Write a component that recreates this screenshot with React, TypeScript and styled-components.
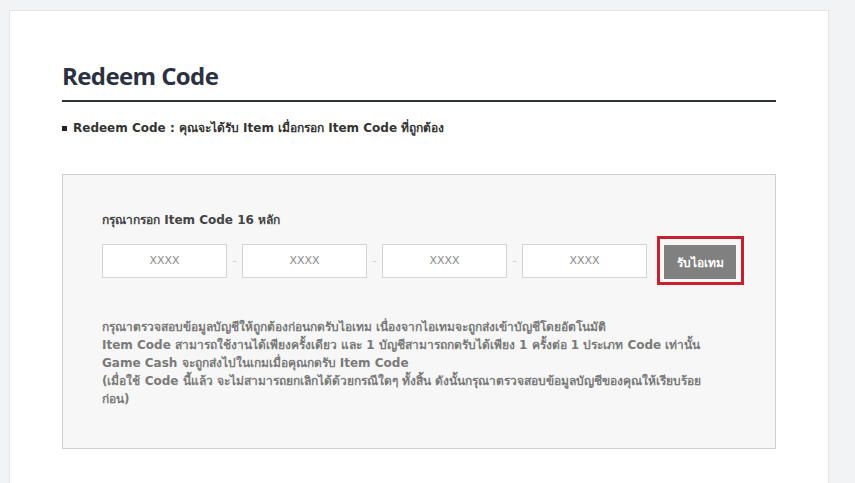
import React from "react";
import styled, { createGlobalStyle } from "styled-components";

const GlobalStyle = createGlobalStyle`
  html, body {
    margin: 0;
    padding: 0;
    background: #f2f3f5;
  }

  body {
    font-family: Tahoma, "DejaVu Sans", "Noto Sans", sans-serif;
  }
`;

const Page = styled.div`
  padding: 10px 26px 0 9px;
  height: 483px;
  overflow: hidden;
  box-sizing: border-box;
`;

const Card = styled.section`
  background: #fff;
  border: 1px solid #e3e3e3;
  min-height: 520px;
  padding: 47px 52px 40px;
  box-sizing: border-box;
`;

const Title = styled.h2`
  margin: 0;
  padding-bottom: 6px;
  border-bottom: 2px solid #2d323b;
  font-family: "Open Sans", "Noto Sans", sans-serif;
  font-size: 24px;
  line-height: 36px;
  font-weight: 700;
  letter-spacing: -0.6px;
  color: #2b3140;
`;

const Notice = styled.p`
  margin: 17px 0 0;
  display: flex;
  align-items: center;
  gap: 6px;
  font-size: 12px;
  line-height: 18px;
  font-weight: 700;
  color: #333;

  &::before {
    content: "";
    width: 5px;
    height: 5px;
    background: #222;
  }
`;

const Box = styled.div`
  margin-top: 37px;
  border: 1px solid #cfcfcf;
  background: #f7f7f7;
  padding: 36px 39px 40px;
`;

const Label = styled.div`
  font-size: 12px;
  line-height: 18px;
  font-weight: 700;
  color: #444;
`;

const CodeRow = styled.div`
  margin-top: 7px;
  display: flex;
  align-items: center;
`;

const CodeInput = styled.input.attrs({ type: "text", placeholder: "XXXX" })`
  flex-shrink: 0;
  width: 125px;
  height: 34px;
  box-sizing: border-box;
  border: 1px solid #d3d3d3;
  background: #fff;
  outline: none;
  text-align: center;
  font-family: Tahoma, "DejaVu Sans", sans-serif;
  font-size: 11px;
  color: #777;

  &::placeholder {
    color: #8a8a8a;
  }
`;

const Dash = styled.span`
  flex-shrink: 0;
  width: 15px;
  text-align: center;
  font-size: 10px;
  color: #c8c8c8;
`;

const Highlight = styled.div`
  flex-shrink: 0;
  margin-left: 10px;
  border: 3px solid #c8202e;
  padding: 6px 5px 3px 4px;
  display: flex;
`;

const RedeemButton = styled.button`
  width: 72px;
  height: 34px;
  border: none;
  background: #808080;
  color: #fff;
  font-family: Tahoma, "DejaVu Sans", sans-serif;
  font-size: 12px;
  font-weight: 700;
  cursor: pointer;
`;

const Notes = styled.div`
  margin-top: 33px;
  max-width: 620px;
  font-size: 12px;
  line-height: 18px;
  font-weight: 700;
  color: #7a7a7a;
`;

const notes = [
  "กรุณาตรวจสอบข้อมูลบัญชีให้ถูกต้องก่อนกดรับไอเทม เนื่องจากไอเทมจะถูกส่งเข้าบัญชีโดยอัตโนมัติ",
  "Item Code สามารถใช้งานได้เพียงครั้งเดียว และ 1 บัญชีสามารถกดรับได้เพียง 1 ครั้งต่อ 1 ประเภท Code เท่านั้น",
  "Game Cash จะถูกส่งไปในเกมเมื่อคุณกดรับ Item Code",
  "(เมื่อใช้ Code นี้แล้ว จะไม่สามารถยกเลิกได้ด้วยกรณีใดๆ ทั้งสิ้น ดังนั้นกรุณาตรวจสอบข้อมูลบัญชีของคุณให้เรียบร้อย ก่อน)",
];

const App: React.FC = () => {
  return (
    <Page>
      <GlobalStyle />
      <Card>
        <Title>Redeem Code</Title>
        <Notice>Redeem Code : คุณจะได้รับ Item เมื่อกรอก Item Code ที่ถูกต้อง</Notice>

        <Box>
          <Label>กรุณากรอก Item Code 16 หลัก</Label>
          <CodeRow>
            <CodeInput />
            <Dash>-</Dash>
            <CodeInput />
            <Dash>-</Dash>
            <CodeInput />
            <Dash>-</Dash>
            <CodeInput />
            <Highlight>
              <RedeemButton>รับไอเทม</RedeemButton>
            </Highlight>
          </CodeRow>

          <Notes>
            {notes.map((n) => (
              <div key={n}>{n}</div>
            ))}
          </Notes>
        </Box>
      </Card>
    </Page>
  );
};

export default App;
